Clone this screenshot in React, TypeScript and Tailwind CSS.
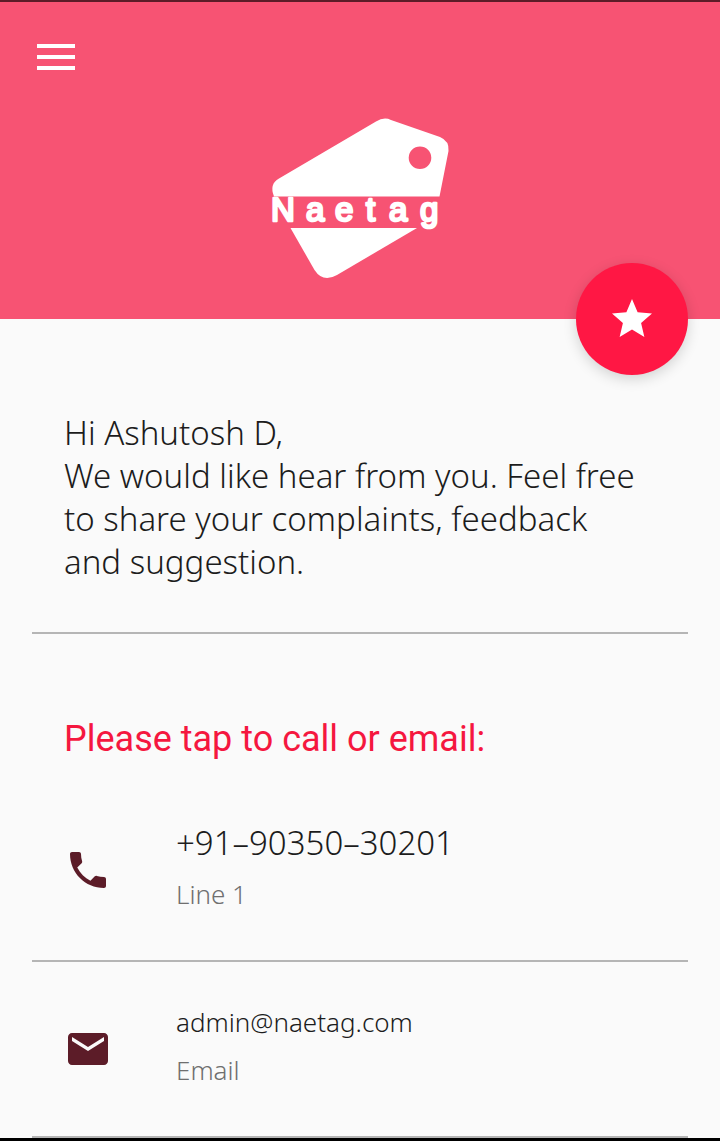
import type { ReactNode } from "react";

function TagLogo() {
  return (
    <svg viewBox="260 105 200 185" className="h-[185px] w-[200px]" role="img" aria-label="Naetag">
      <path
        fill="#fff"
        fillRule="evenodd"
        d="M274 196.500 Q269 184 279 178.500 L376 121.500 Q384 116.500 391 120 L440 137 Q449.500 141 448.500 151 L439.500 196.500 Z M420 146.500 a11.300 11.300 0 1 0 0 22.600 a11.300 11.300 0 1 0 0 -22.600 Z"
      />
      <path fill="#fff" d="M290.500 228 H417 L337 275 Q323 283 314.500 270 Z" />
      <text
        x="271 306 335 366 389 420"
        y="221"
        fill="#fff"
        stroke="#fff"
        strokeWidth="2.5"
        strokeLinejoin="round"
        className="font-['Liberation_Sans',sans-serif] text-[33px] font-normal"
      >
        Naetag
      </text>
    </svg>
  );
}

function ContactRow({
  href,
  icon,
  label,
  children,
}: {
  href: string;
  icon: string;
  label: string;
  children: ReactNode;
}) {
  return (
    <a href={href} className="mx-8 flex items-center gap-16 border-b-2 border-[#b5b5b5] px-8">
      <svg viewBox="0 0 24 24" className="size-12 shrink-0 fill-[#5c1c28]" aria-hidden="true">
        <path d={icon} />
      </svg>
      <span className="flex flex-col gap-3 pt-[42px] pb-12">
        {children}
        <span className="text-[26px] leading-9 text-[#6f6f6f]">{label}</span>
      </span>
    </a>
  );
}

const PHONE =
  "M6.620 10.790c1.440 2.830 3.760 5.140 6.590 6.590l2.200-2.200c.27-.27.67-.36 1.020-.24 1.120.37 2.330.57 3.570.57.55 0 1 .45 1 1V20c0 .55-.45 1-1 1-9.390 0-17-7.610-17-17 0-.55.45-1 1-1h3.500c.55 0 1 .45 1 1 0 1.250.2 2.450.57 3.570.11.35.03.74-.25 1.020l-2.200 2.200z";
const MAIL =
  "M20 4H4c-1.100 0-1.990.9-1.990 2L2 18c0 1.100.9 2 2 2h16c1.100 0 2-.9 2-2V6c0-1.100-.9-2-2-2zm0 4l-8 5-8-5V6l8 5 8-5v2z";

export default function App() {
  return (
    <div className="min-h-screen border-t-2 border-[#5c1c28] bg-[#fafafa] font-['Noto_Sans',sans-serif] font-light text-[#1c1c1c]">
      <header className="relative flex h-[317px] items-start justify-center bg-[#f75373] pt-[103px]">
        <button type="button" aria-label="Open menu" className="absolute top-[42px] left-[37px]">
          <svg viewBox="0 0 38 26" className="h-[26px] w-[38px] fill-white">
            <path d="M0 0h38v4H0zM0 11h38v4H0zM0 22h38v4H0z" />
          </svg>
        </button>
        <TagLogo />
        <button
          type="button"
          aria-label="Rate"
          className="absolute right-8 -bottom-14 flex size-28 items-center justify-center rounded-full bg-[#ff1744] shadow-[0_4px_14px_rgba(0,0,0,0.16)]"
        >
          <svg viewBox="0 0 24 24" className="size-12 fill-white">
            <path d="M12 17.270L18.180 21l-1.640-7.030L22 9.240l-7.190-.61L12 2 9.190 8.630 2 9.240l5.460 4.730L5.820 21z" />
          </svg>
        </button>
      </header>

      <main>
        <p className="mx-8 border-b-2 border-[#b5b5b5] px-8 pt-[92px] pb-[49px] text-[33px] leading-[43px]">
          Hi Ashutosh D,
          <br />
          We would like hear from you. Feel free
          <br />
          to share your complaints, feedback
          <br />
          and suggestion.
        </p>
        <h1 className="mt-[84px] mb-[19px] px-16 font-[Roboto,sans-serif] text-[36px] leading-[42px] font-normal text-[#f5173f]">
          Please tap to call or email:
        </h1>
        <ContactRow href="tel:+919035030201" icon={PHONE} label="Line 1">
          <span className="text-[33px] leading-[43px]">+91–90350–30201</span>
        </ContactRow>
        <ContactRow href="mailto:admin@naetag.com" icon={MAIL} label="Email">
          <span className="text-[26px] leading-9">admin@naetag.com</span>
        </ContactRow>
      </main>
      <footer className="h-[3px] bg-black" />
    </div>
  );
}
